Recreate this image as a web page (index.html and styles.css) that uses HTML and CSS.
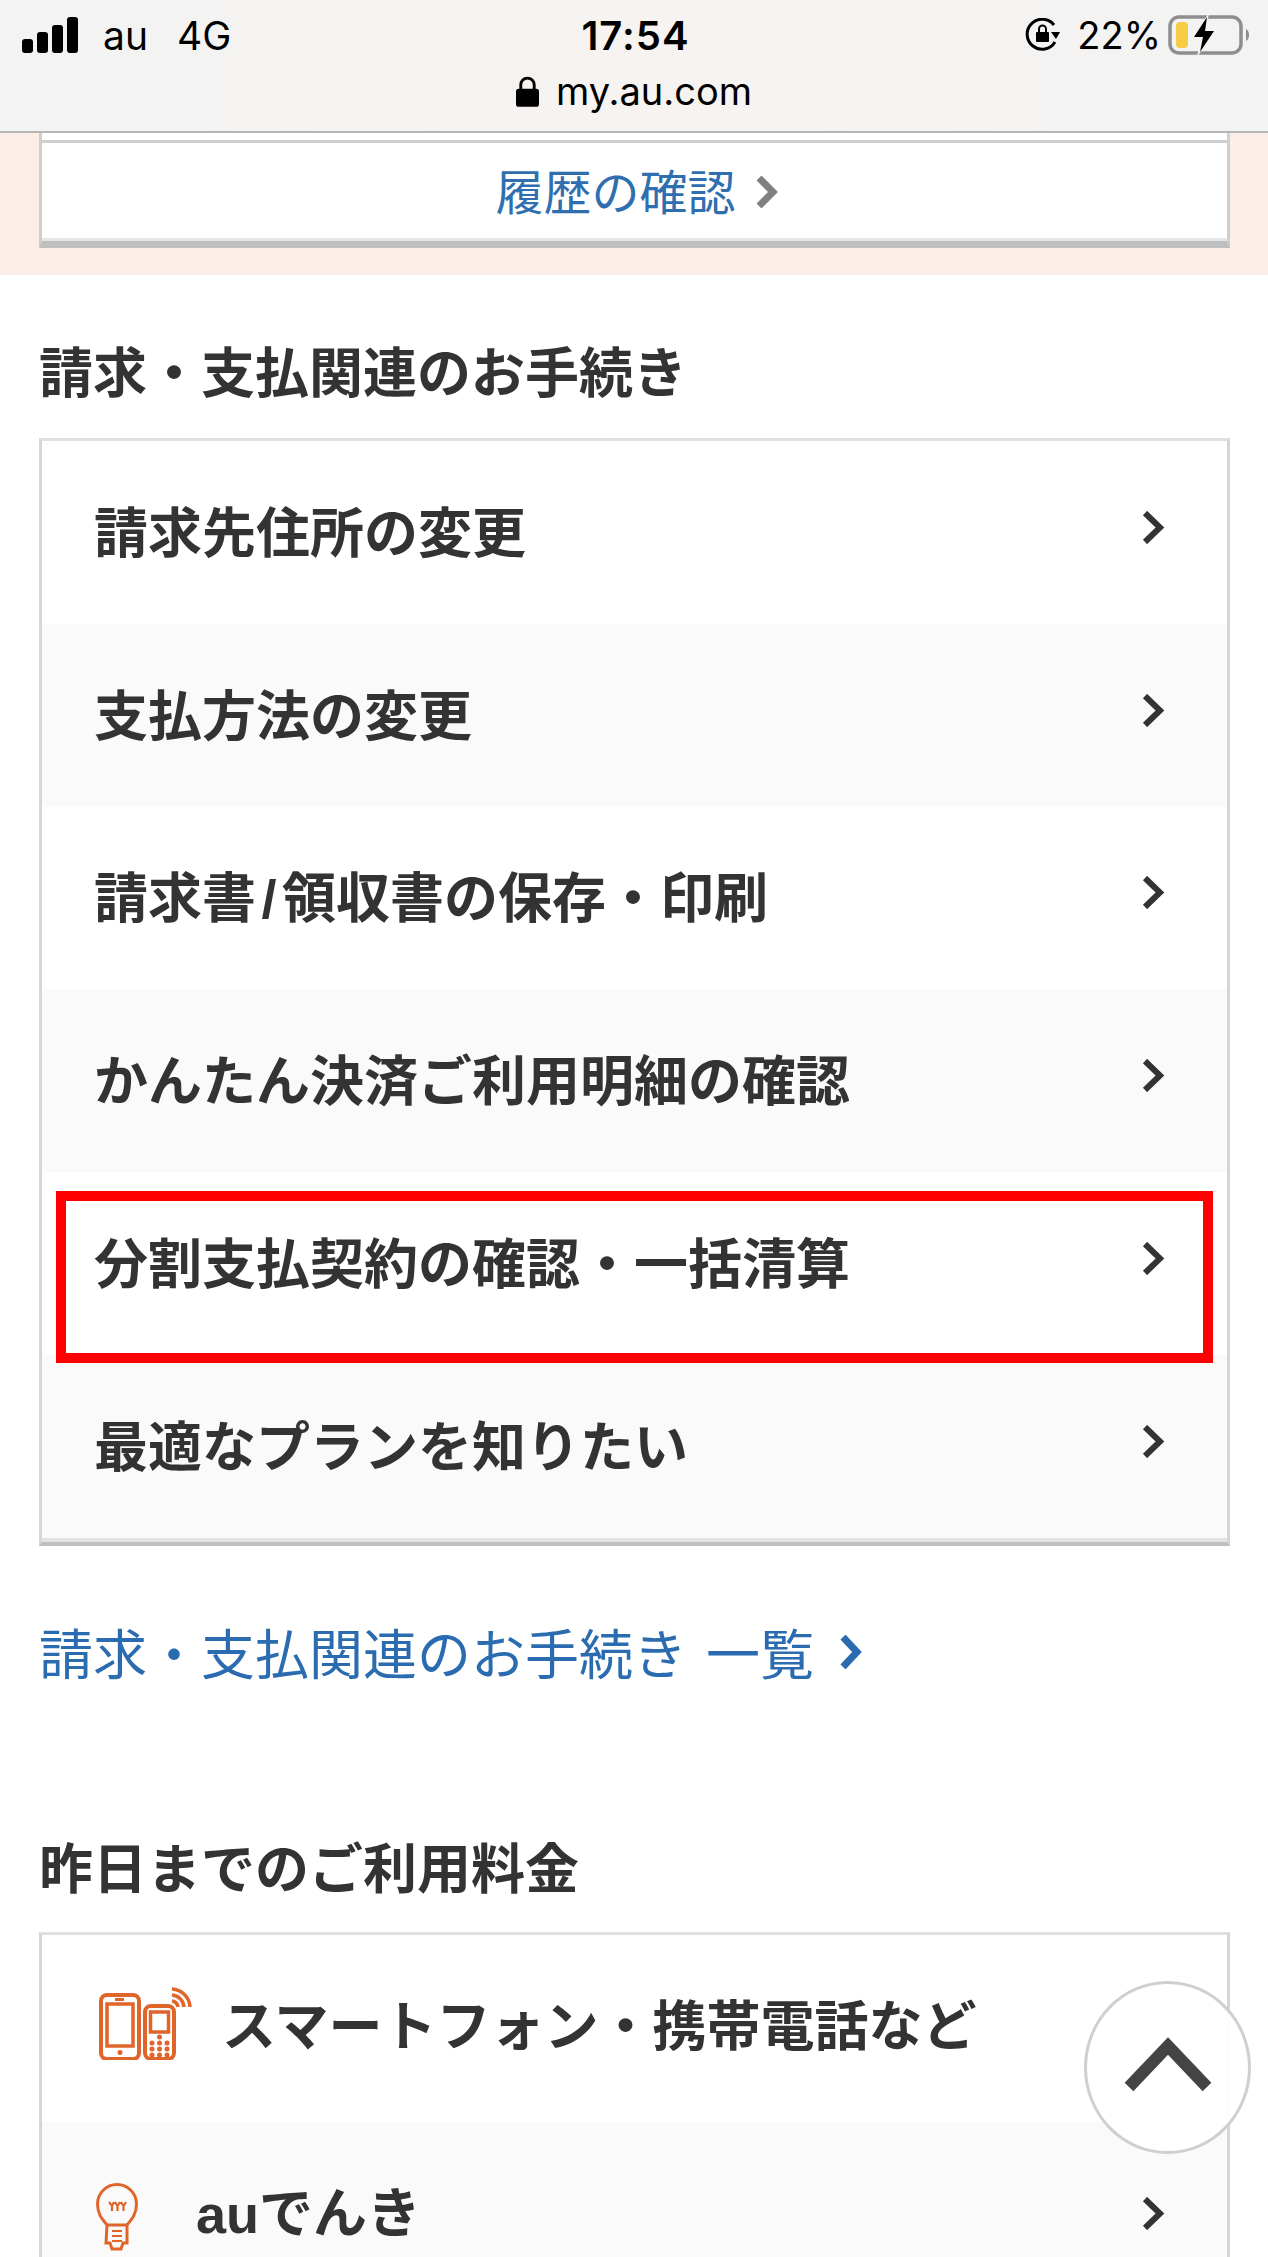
FILE: index.html
```html
<!DOCTYPE html>
<html lang="ja">
<head>
<meta charset="utf-8">
<title>my au</title>
<link rel="stylesheet" href="styles.css">
</head>
<body>
<div class="page">
  <header class="statusbar">
    <div class="status-row">
      <div class="status-left">
        <svg class="signal" viewBox="0 0 56 36"><rect x="0" y="22" width="11" height="14" rx="3"/><rect x="15" y="15" width="11" height="21" rx="3"/><rect x="30" y="8" width="11" height="28" rx="3"/><rect x="45" y="0" width="11" height="36" rx="3"/></svg>
        <span class="carrier">au</span>
        <span class="network">4G</span>
      </div>
      <div class="clock">17:54</div>
      <div class="status-right">
        <svg class="rotlock" viewBox="0 0 36 34"><path d="M30 24A15 15 0 1 1 29 7" fill="none" stroke="#000" stroke-width="3"/><path d="M26 14l9 0-4 7z"/><rect x="11" y="14" width="13" height="10" rx="1"/><path d="M14 14v-3a3.500 3.500 0 0 1 7 0v3" fill="none" stroke="#000" stroke-width="2"/></svg>
        <span class="percent">22%</span>
        <svg class="battery" viewBox="0 0 81 40"><rect x="2" y="2" width="71" height="36" rx="9" fill="none" stroke="#8e8e8e" stroke-width="3.500"/><rect x="8" y="7" width="12" height="26" rx="4" fill="#f8cd46"/><path d="M78 14c2 1 3 3 3 6s-1 5-3 6z" fill="#8e8e8e"/><path d="M41 -2L23 23h10l-4 19 20-27H38z" fill="#f4f4f4"/><path d="M39 2L26 22h9l-3 15 14-21h-9z" fill="#000"/></svg>
      </div>
    </div>
    <div class="address">
      <svg class="lock" viewBox="0 0 24 32"><path d="M5 14V9a7 7 0 0 1 14 0v5" fill="none" stroke="#000" stroke-width="3"/><rect x="0" y="13" width="24" height="19" rx="3"/></svg>
      <span>my.au.com</span>
    </div>
  </header>

  <section class="peach">
    <div class="peach-stub"></div>
    <a class="history-btn">
      <span>履歴の確認</span>
      <svg class="chev-history" viewBox="0 0 22 32"><path d="M3 2l14 14L3 30" fill="none" stroke="#808080" stroke-width="7"/></svg>
    </a>
  </section>

  <main class="content">
    <h2 class="heading heading-first">請求・支払関連のお手続き</h2>
    <ul class="menu menu-first">
      <li class="row"><span>請求先住所の変更</span><svg class="chev" viewBox="0 0 23 33"><path d="M3 2l15 14.500L3 31" fill="none" stroke="#333" stroke-width="6"/></svg></li>
      <li class="row row-alt"><span>支払方法の変更</span><svg class="chev" viewBox="0 0 23 33"><path d="M3 2l15 14.500L3 31" fill="none" stroke="#333" stroke-width="6"/></svg></li>
      <li class="row"><span>請求書<span class="slash">/</span>領収書の保存・印刷</span><svg class="chev" viewBox="0 0 23 33"><path d="M3 2l15 14.500L3 31" fill="none" stroke="#333" stroke-width="6"/></svg></li>
      <li class="row row-alt"><span>かんたん決済ご利用明細の確認</span><svg class="chev" viewBox="0 0 23 33"><path d="M3 2l15 14.500L3 31" fill="none" stroke="#333" stroke-width="6"/></svg></li>
      <li class="row row-marked"><span>分割支払契約の確認・一括清算</span><svg class="chev" viewBox="0 0 23 33"><path d="M3 2l15 14.500L3 31" fill="none" stroke="#333" stroke-width="6"/></svg><div class="red-box"></div></li>
      <li class="row row-alt"><span>最適なプランを知りたい</span><svg class="chev" viewBox="0 0 23 33"><path d="M3 2l15 14.500L3 31" fill="none" stroke="#333" stroke-width="6"/></svg></li>
    </ul>
    <a class="list-link">
      <span>請求・支払関連のお手続き 一覧</span>
      <svg class="chev-link" viewBox="0 0 22 34"><path d="M3 2l14 15L3 32" fill="none" stroke="#2b6cb0" stroke-width="7"/></svg>
    </a>

    <h2 class="heading heading-second">昨日までのご利用料金</h2>
    <ul class="menu menu-second">
      <li class="row row-tall">
        <svg class="icon-phones" viewBox="0 0 93 73" fill="none" stroke="#e0652a" stroke-width="4">
          <rect x="2" y="8" width="38" height="64" rx="6"/>
          <rect x="8" y="17" width="26" height="42" stroke-width="3.500"/>
          <path d="M16 12.500h9" stroke-width="3"/>
          <circle cx="21" cy="65.500" r="2.500" fill="#e0652a" stroke="none"/>
          <rect x="46" y="19" width="29" height="53" rx="6"/>
          <rect x="51.500" y="25" width="18" height="20" stroke-width="3.500"/>
          <g fill="#e0652a" stroke="none"><circle cx="60.500" cy="50" r="2.500"/><circle cx="53" cy="56" r="2.500"/><circle cx="60.500" cy="56" r="2.500"/><circle cx="68" cy="56" r="2.500"/><circle cx="53" cy="62" r="2.500"/><circle cx="60.500" cy="62" r="2.500"/><circle cx="68" cy="62" r="2.500"/><circle cx="53" cy="68" r="2.500"/><circle cx="60.500" cy="68" r="2.500"/><circle cx="68" cy="68" r="2.500"/></g>
          <path d="M73 2a19 19 0 0 1 18 18M73 8a13 13 0 0 1 12 12M73 14a7 7 0 0 1 6 6" stroke-width="3.500"/>
        </svg>
        <span>スマートフォン・携帯電話など</span>
      </li>
      <li class="row row-alt row-tall">
        <svg class="icon-bulb" viewBox="0 0 42 68" fill="none" stroke="#e0652a" stroke-width="3">
          <path d="M11 42C6 36 1.500 31 1.500 21a19.500 19.500 0 0 1 39 0c0 10-4.500 15-9.500 21v18h-4l-2 6h-9l-2-6h-4z"/>
          <path d="M11 42h20"/>
          <path d="M13 19l3 4 2-4m-2 4v5M19 19l2.500 4 2.500-4m-2.500 4v5M25 19l2.500 4 2.500-4m-2.500 4v5" stroke-width="2.200"/>
          <path d="M16 48h10M16 53h10M16 58h10" stroke-width="2.200"/>
        </svg>
        <span class="au-label">auでんき</span>
        <svg class="chev" viewBox="0 0 23 33"><path d="M3 2l15 14.500L3 31" fill="none" stroke="#333" stroke-width="6"/></svg>
      </li>
    </ul>
  </main>

  <a class="to-top">
    <svg viewBox="0 0 88 56"><path d="M5 51L44 10l39 41" fill="none" stroke="#444" stroke-width="12"/></svg>
  </a>
</div>
</body>
</html>
```
FILE: styles.css
```css
* { box-sizing: border-box; }
html, body { margin: 0; padding: 0; background: #fff; }
body {
  font-family: "Liberation Sans", "Noto Sans CJK JP", sans-serif;
  color: #333;
}
.page {
  position: relative;
  width: 1268px;
  height: 2257px;
  overflow: hidden;
  background: #fff;
}

/* status bar */
.statusbar {
  height: 133px;
  background: linear-gradient(90deg, #f3f3f3 0%, #f6f3f1 50%, #f3f3f3 100%);
  border-bottom: 2px solid #b5b5b5;
  color: #000;
  font-family: Inter, "Liberation Sans", sans-serif;
}
.status-row {
  height: 70px;
  display: grid;
  grid-template-columns: 1fr auto 1fr;
  align-items: center;
  padding: 0 19px 0 22px;
}
.status-left { display: flex; align-items: center; }
.signal { width: 56px; height: 36px; margin-right: 25px; display: block; }
.carrier { font-size: 39px; margin-right: 29px; }
.network { font-size: 39px; }
.clock { font-size: 40px; font-weight: 600; letter-spacing: 1px; }
.status-right { display: flex; align-items: center; justify-content: flex-end; }
.rotlock { width: 36px; height: 34px; margin-right: 16px; display: block; }
.percent { font-size: 38px; margin-right: 7px; }
.battery { width: 81px; height: 40px; display: block; }
.address {
  display: flex;
  justify-content: center;
  align-items: center;
  gap: 17px;
  font-size: 38px;
  height: 42px;
  margin-top: 0;
}
.lock { width: 23px; height: 31px; display: block; }

/* peach band */
.peach {
  height: 142px;
  background: #fbeee6;
  padding: 0 38px 0 39px;
}
.peach-stub {
  height: 10px;
  background: #fff;
  border-left: 3px solid #cfcfcf;
  border-right: 3px solid #cfcfcf;
  border-bottom: 3px solid #cfcfcf;
}
.history-btn {
  height: 105px;
  padding: 0 0 6px 4px;
  background: #fff;
  border-left: 3px solid #cfcfcf;
  border-right: 3px solid #cfcfcf;
  border-bottom: 7px solid #bfbfbf;
  box-shadow: inset 0 -3px 0 #e6e6e6;
  display: flex;
  align-items: center;
  justify-content: center;
  gap: 20px;
  font-size: 48px;
  color: #2f6fb0;
}
.chev-history { width: 22px; height: 32px; display: block; transform: translateY(3px); }

/* content */
.content { padding: 0 38px 0 39px; }
.heading {
  margin: 0;
  font-size: 54px;
  line-height: 70px;
  font-weight: 700;
  color: #333;
}
.heading-first { margin-top: 64px; margin-bottom: 29px; }
.heading-second { margin-top: 148px; margin-bottom: 27px; }
.menu {
  list-style: none;
  margin: 0;
  padding: 0;
  border-top: 3px solid #e0e0e0;
  border-left: 3px solid #d6d6d6;
  border-right: 3px solid #d6d6d6;
}
.menu-first { border-bottom: 4px solid #c0c0c0; }
.menu-first::after {
  content: "";
  display: block;
  height: 4px;
  background: #e2e2e2;
}
.menu-second { height: 400px; }
.row {
  position: relative;
  height: 182.8px;
  padding: 0 62px 6px 52px;
  display: flex;
  align-items: center;
  justify-content: space-between;
  font-size: 54px;
  font-weight: 700;
  color: #333;
  background: #fff;
}
.slash { padding: 0 5.5px; }
.row-alt { background: #fafafa; }
.row-tall { height: 187px; padding-bottom: 12px; justify-content: flex-start; }
.chev { width: 23px; height: 33px; display: block; transform: translateY(-2px); }
.row-tall .chev { margin-left: auto; transform: translateY(4px); }
.red-box {
  position: absolute;
  z-index: 1;
  left: 14px;
  right: 14px;
  top: 19px;
  height: 172px;
  border: 10px solid #f00;
}
.list-link {
  margin-top: 71px;
  height: 70px;
  display: flex;
  align-items: center;
  gap: 26px;
  font-size: 54px;
  word-spacing: 4px;
  color: #2b6cb0;
}
.chev-link { width: 22px; height: 34px; display: block; }
.icon-phones { width: 93px; height: 73px; margin-left: 5px; margin-right: 30px; display: block; flex: none; transform: translateY(1px); }
.icon-bulb { width: 42px; height: 68px; margin-left: 2px; margin-right: 58px; display: block; flex: none; transform: translateY(8px); }

/* floating top button */
.to-top {
  position: absolute;
  left: 1084px;
  top: 1981px;
  width: 167px;
  height: 173px;
  border: 3px solid #cfcfcf;
  border-radius: 50%;
  background: rgba(255, 255, 255, 0.95);
  display: flex;
  align-items: center;
  justify-content: center;
}
.to-top svg { width: 88px; height: 56px; display: block; transform: translateY(-4px); }
```
